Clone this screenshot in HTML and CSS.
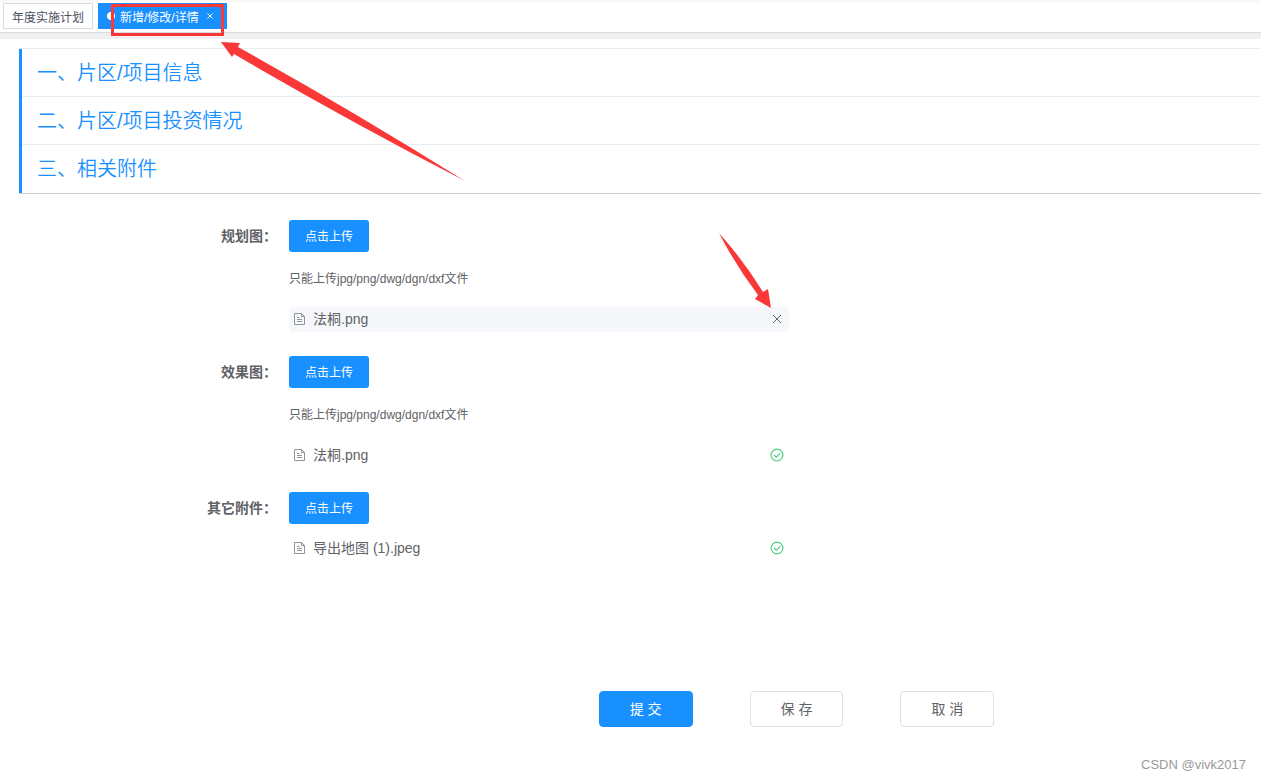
FILE: index.html
```html
<!DOCTYPE html>
<html lang="zh-CN">
<head>
<meta charset="utf-8">
<title>年度实施计划</title>
<link rel="stylesheet" href="styles.css">
</head>
<body>
<svg class="symbols" aria-hidden="true">
  <symbol id="icon-doc" viewBox="0 0 14 14">
    <path d="M1.500 1.500H8.500L11.500 4.500V12.500H1.500zM8.500 1.500V4.500H11.500M4 5.500h2.500M4 7.500h5M4 9.500h5" fill="none" stroke="currentColor"/>
  </symbol>
  <symbol id="icon-check" viewBox="0 0 14 14">
    <circle cx="7" cy="7" r="5.900" fill="none" stroke="currentColor" stroke-width="1.200"/>
    <path d="M4 7l2.300 2.200 4-4" fill="none" stroke="currentColor" stroke-width="1.200"/>
  </symbol>
  <symbol id="icon-close" viewBox="0 0 14 14">
    <path d="M3 3l8 8M11 3l-8 8" fill="none" stroke="currentColor"/>
  </symbol>
</svg>

<nav class="tags">
  <a class="tag" href="#plan">年度实施计划</a>
  <a class="tag tag-active" href="#detail"><span class="dot"></span>新增/修改/详情<span class="tag-close"><svg viewBox="0 0 6 6"><path d="M.5 .5l5 5M5.500 .5l-5 5" stroke="currentColor"/></svg></span></a>
</nav>

<main class="page">
  <section class="collapse">
    <button class="collapse-head" type="button">一、片区/项目信息</button>
    <button class="collapse-head" type="button">二、片区/项目投资情况</button>
    <button class="collapse-head" type="button">三、相关附件</button>
  </section>

  <form class="form">
    <div class="row">
      <label class="label" for="up-plan">规划图：</label>
      <div class="content">
        <button class="upload" id="up-plan" type="button">点击上传</button>
        <p class="tip">只能上传jpg/png/dwg/dgn/dxf文件</p>
        <div class="file file-hover">
          <svg class="doc"><use href="#icon-doc"/></svg>
          <span class="name">法桐.png</span>
          <button class="remove" type="button" aria-label="删除"><svg class="mark"><use href="#icon-close"/></svg></button>
        </div>
      </div>
    </div>
    <div class="row">
      <label class="label" for="up-effect">效果图：</label>
      <div class="content">
        <button class="upload" id="up-effect" type="button">点击上传</button>
        <p class="tip">只能上传jpg/png/dwg/dgn/dxf文件</p>
        <div class="file">
          <svg class="doc"><use href="#icon-doc"/></svg>
          <span class="name">法桐.png</span>
          <svg class="mark done"><use href="#icon-check"/></svg>
        </div>
      </div>
    </div>
    <div class="row">
      <label class="label" for="up-other">其它附件：</label>
      <div class="content">
        <button class="upload" id="up-other" type="button">点击上传</button>
        <div class="file file-near">
          <svg class="doc"><use href="#icon-doc"/></svg>
          <span class="name">导出地图 (1).jpeg</span>
          <svg class="mark done"><use href="#icon-check"/></svg>
        </div>
      </div>
    </div>
    <div class="actions">
      <button class="btn btn-primary" type="button">提 交</button>
      <button class="btn" type="button">保 存</button>
      <button class="btn" type="button">取 消</button>
    </div>
  </form>
</main>

<svg class="notes" width="800" height="320" viewBox="0 0 800 320" aria-hidden="true">
  <rect x="112.500" y="5.500" width="110" height="29" fill="none" stroke="#fb3838" stroke-width="3"/>
  <path d="M221 42L240 43L238 47Q350 109 465 181Q345 119 234 54L232 57z" fill="#fb3838"/>
  <path d="M719 233Q744 261 763 292L768 289L771 308L755 299L758 295Q736 266 719 233z" fill="#fb3838"/>
</svg>
<div class="watermark">CSDN @vivk2017</div>
</body>
</html>
```

FILE: styles.css
```css
* { box-sizing: border-box; }

body {
  margin: 0;
  background: #fff;
  color: #606266;
  font-family: "Liberation Sans", "Noto Sans CJK SC", sans-serif;
  font-size: 14px;
}

button { font-family: inherit; cursor: pointer; }

.symbols { display: none; }

.tags {
  display: flex;
  gap: 5px;
  padding: 3px 3px;
  height: 39px;
  border-bottom: 6px solid #f0f0f0;
  background: linear-gradient(#f7f7f7, #fff 4px);
  box-shadow: inset 0 -1px 0 #d8dce5;
}

.tag {
  display: flex;
  align-items: center;
  height: 26px;
  padding: 0 8px;
  border: 1px solid #d8dce5;
  background: #fff;
  color: #495060;
  font-size: 12px;
  text-decoration: none;
  white-space: nowrap;
}

.tag-active {
  border-color: #1890ff;
  background: #1890ff;
  color: #fff;
}

.dot {
  width: 8px;
  height: 8px;
  margin-right: 5px;
  border-radius: 50%;
  background: #fff;
}

.tag-close {
  display: flex;
  align-items: center;
  justify-content: center;
  width: 16px;
  margin-left: 3px;
}

.tag-close svg { width: 6px; height: 6px; }

.page { padding: 9px 0 0 19px; }

.collapse {
  border-top: 1px solid #e6ebf5;
  border-bottom: 1px solid #ccc;
}

.collapse-head {
  display: block;
  width: 100%;
  height: 48px;
  padding: 0 0 4px 15px;
  border: 0;
  border-left: 3px solid #1890ff;
  background: #fff;
  box-shadow: inset 0 -1px 0 #e6ebf5;
  color: #1890ff;
  font-size: 20px;
  font-weight: 350;
  text-align: left;
}

.collapse-head:last-child { box-shadow: none; }

.form { padding-top: 26px; }

.row { display: flex; margin-bottom: 24px; }

.label {
  width: 270px;
  padding-right: 12px;
  line-height: 32px;
  font-weight: 700;
  text-align: right;
}

.content { flex: 0 1 500px; }

.upload {
  display: block;
  height: 32px;
  padding: 0 16px 2px;
  border: 0;
  border-radius: 3px;
  background: #1890ff;
  color: #fff;
  font-size: 12px;
}

.tip {
  margin: 15px 0 16px;
  font-size: 12px;
  line-height: 24px;
}

.file {
  display: flex;
  align-items: center;
  height: 25px;
  padding: 0 5px 2px 4px;
  border-radius: 4px;
}

.file-hover { background: #f5f7fa; }

.file-near { margin-top: 12px; }

.doc {
  width: 14px;
  height: 14px;
  margin-right: 6px;
  color: #909399;
}

.name { flex: 1; line-height: 20px; }

.mark { display: block; width: 14px; height: 14px; }

.done { color: #4fcf7f; }

.remove {
  padding: 0;
  border: 0;
  background: none;
  color: #606266;
}

.actions {
  display: flex;
  justify-content: center;
  gap: 57px;
  padding: 106px 0 52px 313px;
}

.btn {
  height: 36px;
  padding: 0 30px 2px;
  border: 1px solid #dcdfe6;
  border-radius: 4px;
  background: #fff;
  color: #606266;
  font-size: 14px;
}

.btn-primary {
  border-color: #1890ff;
  background: #1890ff;
  color: #fff;
}

.notes {
  position: absolute;
  top: 0;
  left: 0;
  pointer-events: none;
}

.watermark {
  position: absolute;
  right: 15px;
  bottom: 7px;
  color: #999;
  font-size: 13px;
}
```
